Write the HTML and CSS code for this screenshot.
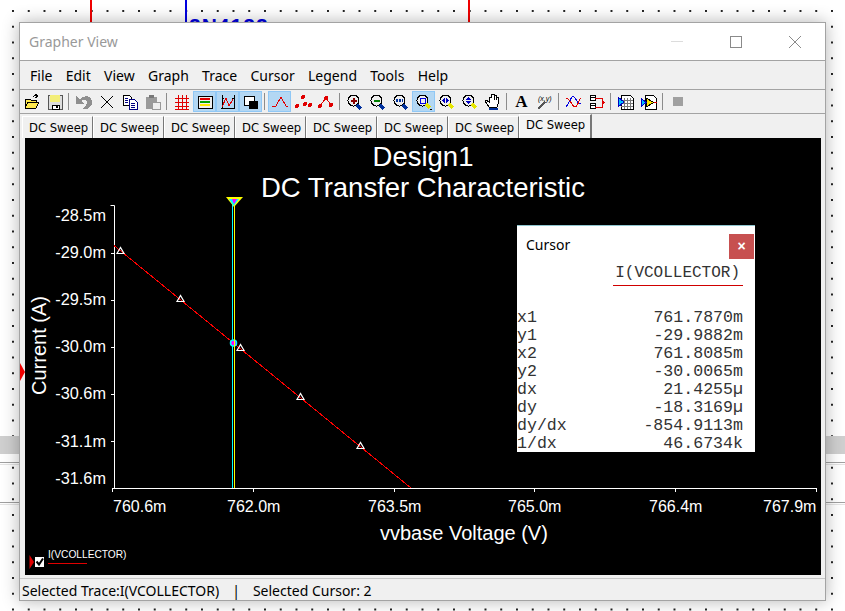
FILE: index.html
```html
<!DOCTYPE html>
<html>
  <head>
    <title>Grapher View</title>
    <link rel="stylesheet" href="styles.css">
  </head>
  <body>

    <div class="wire wireRed" style="left:90px"></div>
    <div class="wire wireBlue" style="left:185px"></div>
    <div class="wire wireRed" style="left:468px"></div>
    <div class="partName">2N4122</div>
    <div class="schemBand"></div>
    <div class="schemLine" style="top:462px"></div>
    <div class="schemLine" style="top:502px"></div>
    <div class="probeArrow"></div>

    <div class="window">
      <div class="titleBar">
        <span class="titleText">Grapher View</span>
        <span class="winBtn"><span class="winMin"></span></span>
        <span class="winBtn"><span class="winMax"></span></span>
        <span class="winBtn">
          <svg width="14" height="14" viewBox="0 0 14 14"><path d="M1 1L13 13M13 1L1 13" stroke="#8a8a8a" fill="none"/></svg>
        </span>
      </div>

      <div class="menuBar">
        <span>File</span><span>Edit</span><span>View</span><span>Graph</span><span>Trace</span><span>Cursor</span><span>Legend</span><span>Tools</span><span>Help</span>
      </div>

      <div class="toolBar">
        <span class="tool"><svg viewBox="0 0 16 16"><path d="M1 5h5l1 1h5v2h3l-3 6H1z" fill="#ffe94d" stroke="#000"/><path d="M1 14l3-6h11" fill="none" stroke="#000"/><path d="M9 3c1-2 3-2 4-1M11 0l3 2-3 2" fill="none" stroke="#000"/></svg></span>
        <span class="tool"><svg viewBox="0 0 16 16"><path d="M1 1h14v14H1z" fill="#ddd" stroke="#555"/><path d="M3 1h10v7H3z" fill="#f3ee78"/><path d="M5 11h7v4H5z" fill="#fff" stroke="#000"/><path d="M9 12h2v2H9z"/></svg></span>
        <span class="toolSep"></span>
        <span class="tool"><svg viewBox="0 0 16 16"><path d="M0 2v8h8L5 7c3-2 6-2 6 2 0 2-2 4-4 6h4c3-1 5-4 5-7 0-6-7-8-12-3z" fill="#8f8f8f"/></svg></span>
        <span class="tool"><svg viewBox="0 0 16 16"><path d="M2 2l12 12M14 2L2 14" stroke="#000" fill="none"/></svg></span>
        <span class="tool"><svg viewBox="0 0 16 16"><path d="M1 1h6l2 2v8H1z" fill="#fff" stroke="#000"/><path d="M7 5h5l3 3v7H7z" fill="#fff" stroke="#000080"/><path d="M3 4h3M3 6h3M3 8h3M9 9h4M9 11h4M9 13h4" stroke="#000080"/></svg></span>
        <span class="tool"><svg viewBox="0 0 16 16"><path d="M1 3h11v12H1z" fill="#9a9a9a"/><path d="M4 1h5v3H4z" fill="#777"/><path d="M7 8h8v7H7z" fill="#eee" stroke="#999"/></svg></span>
        <span class="toolSep"></span>
        <span class="tool"><svg viewBox="0 0 16 16"><path d="M1 4h14M1 8h14M1 12h14M4 1v14M8 1v14M12 1v14M1 15h14" stroke="#e00000" fill="none"/></svg></span>
        <span class="tool toolOn"><svg viewBox="0 0 16 16"><path d="M1 2h14v12H1z" fill="#eee" stroke="#000"/><rect x="3" y="4" width="10" height="2" fill="#e00000"/><rect x="3" y="7" width="10" height="2" fill="#00a000"/><rect x="3" y="10" width="10" height="2" fill="#ffe800"/></svg></span>
        <span class="tool toolOn"><svg viewBox="0 0 16 16"><path d="M2 1v14M14 1v14M1 14h14M2 4h2M12 4h2" stroke="#000" fill="none"/><path d="M2 13L6 4l3 8 4-7" stroke="#e00000" fill="none"/></svg></span>
        <span class="tool toolOn"><svg viewBox="0 0 16 16"><path d="M1 2h10v9H1z" fill="#fff" stroke="#000"/><path d="M6 7h9v8H6z"/></svg></span>
        <span class="toolSep"></span>
        <span class="tool toolOn"><svg viewBox="0 0 16 16"><path d="M0 12h4l5-9 5 9h2" stroke="#e00000" fill="none"/></svg></span>
        <span class="tool"><svg viewBox="0 0 16 16" fill="#e00000"><circle cx="2" cy="12" r="2"/><circle cx="8" cy="3" r="2"/><circle cx="10" cy="10" r="2"/><circle cx="15" cy="11" r="2"/></svg></span>
        <span class="tool"><svg viewBox="0 0 16 16" fill="#e00000"><path d="M2 12l6-8 6 8" stroke="#e00000" fill="none"/><circle cx="2" cy="12" r="2"/><circle cx="8" cy="4" r="2"/><circle cx="13" cy="11" r="2"/></svg></span>
        <span class="toolSep"></span>
        <span class="tool"><svg viewBox="0 0 16 16"><circle cx="6.5" cy="6.5" r="5.5" fill="#eee" stroke="#000"/><path d="M3.500 6.500h6M6.500 3.500v6" stroke="#8b0000" stroke-width="2"/><path d="M10 11l4 4" stroke="#00309c" stroke-width="3"/></svg></span>
        <span class="tool"><svg viewBox="0 0 16 16"><circle cx="6.5" cy="6.5" r="5.5" fill="#eee" stroke="#000"/><path d="M3.500 6.500h6" stroke="#008000" stroke-width="2"/><path d="M10 11l4 4" stroke="#00309c" stroke-width="3"/></svg></span>
        <span class="tool"><svg viewBox="0 0 16 16"><circle cx="6.5" cy="6.5" r="5.500" fill="#eee" stroke="#000"/><path d="M3 5h2v3H3zM6 5h2v3H6zM9 5h1v3H9z" fill="#00309c"/><path d="M10 11l4 4" stroke="#00309c" stroke-width="3"/></svg></span>
        <span class="tool toolOn"><svg viewBox="0 0 16 16"><circle cx="6.500" cy="6.500" r="5.500" fill="#eee" stroke="#000"/><path d="M4 4h5v5H4z" fill="none" stroke="#0000e0"/><path d="M10 10l4 4" stroke="#e6e600" stroke-width="3"/><path d="M14 15h2" stroke="#000"/></svg></span>
        <span class="tool"><svg viewBox="0 0 16 16"><circle cx="6.500" cy="6.500" r="5.500" fill="#eee" stroke="#000"/><path d="M6 4v5L3 6.500zM7 4v5l3-2.500z" fill="#0000c0"/><path d="M10 10l4 4" stroke="#e6e600" stroke-width="3"/></svg></span>
        <span class="tool"><svg viewBox="0 0 16 16"><circle cx="6.500" cy="6.500" r="5.500" fill="#eee" stroke="#000"/><path d="M4 6l2.500-3L9 6zM4 7l2.500 3L9 7z" fill="#0000c0"/><path d="M10 10l4 4" stroke="#e6e600" stroke-width="3"/></svg></span>
        <span class="tool"><svg viewBox="0 0 16 16"><path d="M4 13L0 7l1-1 3 2V3h2V0h2v0h1v6V1h2v5V3h2v7l-1 3z" fill="#fff" stroke="#000"/><path d="M4 15h9" stroke="#00309c" stroke-width="2"/></svg></span>
        <span class="toolSep"></span>
        <span class="tool toolLetter">A</span>
        <span class="tool"><svg viewBox="0 0 16 16"><text x="1" y="7" class="xyText">(x,y)</text><path d="M1 15l7-7" stroke="#555" stroke-width="1.500"/></svg></span>
        <span class="toolSep"></span>
        <span class="tool"><svg viewBox="0 0 16 16"><path d="M0 13C4 9 5 1 8 3s3 8 7 6" stroke="#0000e0" fill="none"/><path d="M0 5c4-2 6 8 9 8s4-8 6-9" stroke="#e00000" fill="none"/></svg></span>
        <span class="tool"><svg viewBox="0 0 16 16"><path d="M1 1h5v5H1zM1 9h5v5H1z" fill="#fff" stroke="#000"/><path d="M1 3h5M1 11h5" stroke="#000"/><path d="M6 4h7v9H6" fill="none" stroke="#e00000"/><path d="M13 6l3 2.500-3 2.500z" fill="#e00000"/></svg></span>
        <span class="toolSep"></span>
        <span class="tool"><svg viewBox="0 0 16 16"><path d="M3 1h9l3 3v11H3z" fill="#fff" stroke="#000"/><path d="M3 6h12M3 9h12M3 12h12M6 4v11M9 4v11M12 4v11" stroke="#777"/><path d="M0 3l6 5-6 5z" fill="#00bfff" stroke="#0000c0"/></svg></span>
        <span class="tool"><svg viewBox="0 0 16 16"><path d="M4 1h8l3 3v11H4z" fill="#fff" stroke="#000"/><path d="M5 4l8 4.500L5 13z" fill="#ffe800" stroke="#000"/><path d="M0 4l5 4.500L0 13z" fill="#00bfff" stroke="#0000c0"/><path d="M13 8h3" stroke="#e00000"/></svg></span>
        <span class="toolSep"></span>
        <span class="tool"><span class="stopBox"></span></span>
      </div>

      <div class="tabBar">
        <span class="tab">DC Sweep</span>
        <span class="tab">DC Sweep</span>
        <span class="tab">DC Sweep</span>
        <span class="tab">DC Sweep</span>
        <span class="tab">DC Sweep</span>
        <span class="tab">DC Sweep</span>
        <span class="tab">DC Sweep</span>
        <span class="tab tabOn">DC Sweep</span>
      </div>

      <div class="plot">
        <svg class="plotSvg" width="796" height="437" viewBox="25 138 796 437">
          <text x="423" y="166" class="plotTitle">Design1</text>
          <text x="423" y="197" class="plotTitle">DC Transfer Characteristic</text>

          <!-- axes -->
          <path d="M110.500 205.500H114.500V488.500M114.500 253.500H111M114.500 300.500H111M114.500 347.500H111M114.500 394.500H111M114.500 441.500H111M112 488.500H817M112.500 488V492M253.500 488V492M394.500 488V492M534.500 488V492M675.500 488V492M816.500 488V492" stroke="#fff" fill="none"/>

          <g class="tickY">
            <text x="106" y="221">-28.5m</text>
            <text x="106" y="258">-29.0m</text>
            <text x="106" y="305">-29.5m</text>
            <text x="106" y="352">-30.0m</text>
            <text x="106" y="399">-30.6m</text>
            <text x="106" y="447">-31.1m</text>
            <text x="106" y="484">-31.6m</text>
          </g>
          <g class="tickX">
            <text x="113" y="512">760.6m</text>
            <text x="227" y="512">762.0m</text>
            <text x="368" y="512">763.5m</text>
            <text x="508" y="512">765.0m</text>
            <text x="649" y="512">766.4m</text>
            <text x="763" y="512">767.9m</text>
          </g>

          <text x="380" y="540" class="axisName">vvbase Voltage (V)</text>
          <text transform="translate(46 395) rotate(-90)" class="axisName">Current (A)</text>

          <!-- trace -->
          <path class="traceLine" d="M114 245.500L411 488"/>
          <g class="marker">
            <path d="M120.500 247.500L117 253.500H124Z"/>
            <path d="M180.500 295.500L177 301.500H184Z"/>
            <path d="M240.500 344.500L237 350.500H244Z"/>
            <path d="M300.500 393.500L297 399.500H304Z"/>
            <path d="M360.500 442.500L357 448.500H364Z"/>
          </g>

          <!-- cursors -->
          <path d="M232.500 200V488" stroke="#00ffff"/>
          <path d="M234.500 200V488" stroke="#ffff00"/>
          <path d="M226 197H243L234 207Z" fill="#ffff00"/>
          <path d="M229 199H239L233.500 206Z" fill="#00ffff"/>
          <path d="M232 199H237L234 204Z" fill="#ff00ff"/>
          <circle cx="233.500" cy="343" r="3" fill="#ff00ff" stroke="#00ffff" stroke-width="1.500"/>
          <path d="M234.500 339V347" stroke="#ffff00"/>

          <!-- legend -->
          <path d="M29.500 555L34 562L29.500 569Z" fill="#e00000"/>
          <rect x="35" y="557" width="9" height="10" fill="#fff"/>
          <path d="M36.500 561.500L39 564.500L43 558.500" stroke="#000" stroke-width="2" fill="none"/>
          <text x="48" y="558" class="legendText">I(VCOLLECTOR)</text>
          <path d="M48 563.500H87" stroke="#e00000"/>
        </svg>

        <div class="cursorBox">
          <div class="cursorHead">
            <span class="cursorTitle">Cursor</span>
            <span class="cursorClose">&#215;</span>
          </div>
          <div class="cursorCol"><span>I(VCOLLECTOR)</span></div>
          <div class="cursorRows">
            <div class="cursorRow"><span>x1</span><span>761.7870m</span></div>
            <div class="cursorRow"><span>y1</span><span>-29.9882m</span></div>
            <div class="cursorRow"><span>x2</span><span>761.8085m</span></div>
            <div class="cursorRow"><span>y2</span><span>-30.0065m</span></div>
            <div class="cursorRow"><span>dx</span><span>21.4255µ</span></div>
            <div class="cursorRow"><span>dy</span><span>-18.3169µ</span></div>
            <div class="cursorRow"><span>dy/dx</span><span>-854.9113m</span></div>
            <div class="cursorRow"><span>1/dx</span><span>46.6734k</span></div>
          </div>
        </div>
      </div>

      <div class="statusBar">
        <span>Selected Trace:I(VCOLLECTOR)</span>
        <span>|</span>
        <span>Selected Cursor: 2</span>
      </div>
    </div>

  </body>
</html>
```
FILE: styles.css
```css
html, body { margin: 0; height: 611px; overflow: hidden; }
body {
    position: relative;
    background-color: #fff;
    background-image: radial-gradient(circle at 1px 1px, #222 0.8px, transparent 1px);
    background-size: 15.75px 15.75px;
    background-position: 12px 10px;
    font-family: "Noto Sans", sans-serif;
    color: #000;
}

/* schematic behind the window */
.wire { position: absolute; top: 0; width: 2px; height: 24px; }
.wireRed { background: #f00000; }
.wireBlue { background: #0000e0; }
.partName {
    position: absolute;
    left: 189px;
    top: 14px;
    font: bold 21px "Liberation Sans", sans-serif;
    letter-spacing: 1px;
    color: #0000e0;
}
.schemBand { position: absolute; left: 0; top: 436px; width: 845px; height: 18px; background: #cfcfcf; }
.schemLine { position: absolute; left: 0; width: 845px; height: 1px; background: #a0a0a0; box-shadow: 0 2px 0 #e4e4e4; }
.probeArrow {
    position: absolute;
    left: 20px;
    top: 363px;
    z-index: 2;
    border-left: 5px solid #f00000;
    border-top: 9px solid transparent;
    border-bottom: 9px solid transparent;
}

.window {
    position: relative;
    z-index: 1;
    box-sizing: border-box;
    width: 807px;
    height: 579px;
    margin: 22px 0 0 19px;
    display: flex;
    flex-direction: column;
    border: 1px solid #a3a3a3;
    background: #f0f0f0;
    box-shadow: 0 0 16px rgba(0, 0, 0, 0.3);
}

.titleBar {
    flex: none;
    height: 37px;
    display: flex;
    align-items: center;
    padding-right: 1px;
    background: #fff;
    border-bottom: 1px solid #a3a3a3;
}
.titleText { flex: 1; padding-left: 9px; font-size: 14px; color: #999; }
.winBtn { width: 59px; height: 37px; display: flex; align-items: center; justify-content: center; }
.winMin { width: 12px; height: 1px; background: #dcdcdc; }
.winMax { width: 10px; height: 10px; border: 1px solid #8a8a8a; }

.menuBar {
    flex: none;
    height: 28px;
    display: flex;
    align-items: center;
    gap: 13.3px;
    padding-left: 10px;
    border-bottom: 1px solid #a3a3a3;
    font-size: 14px;
}

.toolBar {
    flex: none;
    height: 23px;
    display: flex;
    align-items: center;
    border-bottom: 1px solid #a3a3a3;
}
.tool {
    box-sizing: border-box;
    width: 23px;
    height: 21px;
    display: flex;
    align-items: center;
    justify-content: center;
    border: 1px solid transparent;
}
.tool svg { width: 16px; height: 16px; overflow: visible; shape-rendering: crispEdges; }
.toolOn { background: #b3d7f3; border-color: #90c8f6; }
.toolSep { box-sizing: border-box; width: 6px; height: 17px; margin: 0; border-left: 2px solid transparent; }
.toolSep::after { content: ""; display: block; width: 1px; height: 17px; background: #8c8c8c; }
.toolLetter { font: bold 17px "Liberation Serif", serif; }
.xyText { font: italic 7px "Liberation Sans", sans-serif; fill: #000; }
.stopBox { width: 10px; height: 9px; background: #a0a0a0; }

.tabBar {
    flex: none;
    height: 24px;
    display: flex;
    align-items: flex-end;
    padding-left: 2px;
    font: 11.6px "DejaVu Sans", sans-serif;
}
.tab {
    box-sizing: border-box;
    width: 71px;
    height: 22px;
    padding: 4px 0 0 6px;
    border-top: 1px solid #fff;
    border-left: 1px solid #fff;
    border-right: 1px solid #777;
}
.tabOn { height: 24px; width: 73px; padding: 3px 0 0 6px; background: #f4f4f4; border-right-width: 2px; }

.plot { position: relative; flex: none; width: 796px; height: 437px; margin-left: 5px; background: #000; }
.plotSvg { display: block; font-family: "Liberation Sans", sans-serif; }
.plotTitle { font-size: 27.5px; fill: #fff; text-anchor: middle; }
.tickY text { font-size: 16.3px; fill: #fff; text-anchor: end; }
.tickX text { font-size: 16px; fill: #fff; }
.axisName { font-size: 20px; fill: #fff; }
.traceLine { stroke: #ff0000; fill: none; shape-rendering: crispEdges; }
.marker path { fill: none; stroke: #fff; stroke-width: 1.2; }
.legendText { font-size: 10.2px; fill: #fff; }

.cursorBox {
    position: absolute;
    left: 492px;
    top: 87px;
    box-sizing: border-box;
    width: 238px;
    height: 227px;
    background: #fff;
    border-top: 1px solid #8fc6cf;
}
.cursorHead { height: 33px; position: relative; }
.cursorTitle { position: absolute; left: 9px; top: 9px; font-size: 14px; line-height: 20px; }
.cursorClose {
    position: absolute;
    right: 1px;
    top: 8px;
    width: 25px;
    height: 25px;
    background: #c75050;
    color: #fff;
    font: bold 14px/25px "Liberation Sans", sans-serif;
    text-align: center;
}
.cursorCol {
    display: flex;
    justify-content: flex-end;
    margin-right: 12px;
    height: 26px;
    font: 16px/28px "Liberation Mono", monospace;
    color: #333;
}
.cursorCol span { border-bottom: 1px solid #d00000; height: 26px; padding: 0 3px 0 2px; }
.cursorRows { margin-top: 24px; font: 16.6px/18px "Liberation Mono", monospace; color: #333; }
.cursorRow { display: flex; justify-content: space-between; padding-right: 12px; height: 18px; }

.statusBar {
    flex: none;
    height: 22px;
    margin-top: 3px;
    padding: 2px 0 0 2px;
    box-sizing: border-box;
    border-top: 1px solid #c8c8c8;
    display: flex;
    align-items: center;
    gap: 13px;
    font-size: 14px;
}
```
